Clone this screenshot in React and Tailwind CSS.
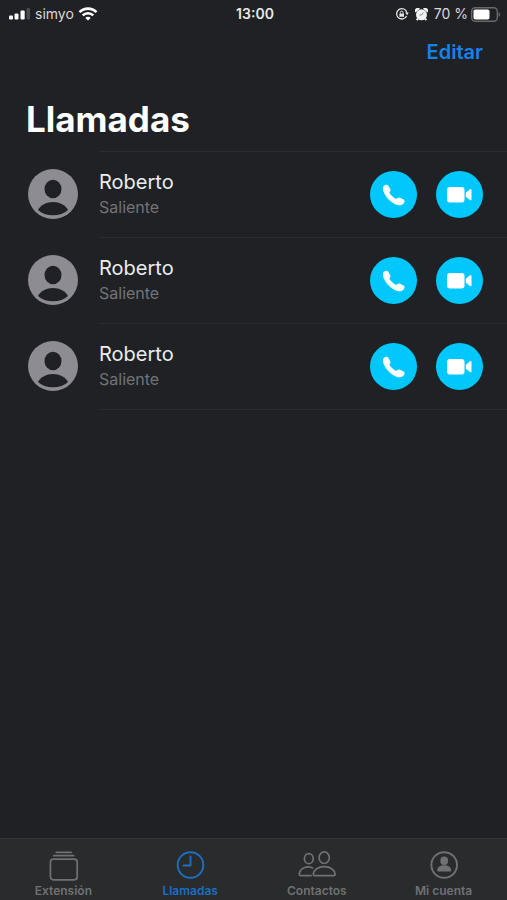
const calls = [
  { id: 1, name: "Roberto", kind: "Saliente" },
  { id: 2, name: "Roberto", kind: "Saliente" },
  { id: 3, name: "Roberto", kind: "Saliente" },
];

function SignalIcon() {
  return (
    <svg className="h-3 w-[22px]" viewBox="0 0 22 12" aria-hidden="true">
      <rect x="0" y="7.500" width="4" height="4" rx="1" fill="#fff" />
      <rect x="5.500" y="5.500" width="4" height="6" rx="1" fill="#fff" />
      <rect x="11.500" y="2.500" width="4.200" height="9" rx="1" fill="#fff" />
      <rect x="17.500" y="0" width="3.500" height="11.500" rx="1" fill="#4b4c4f" />
    </svg>
  );
}

function WifiIcon() {
  return (
    <svg className="h-[14px] w-5" viewBox="0 0 19 14" fill="none" stroke="#fff" strokeWidth="2.600" aria-hidden="true">
      <path d="M1 5.200C5.800.4 13.200.4 18 5.200" />
      <path d="M4.200 8.400c3-2.900 7.600-2.900 10.600 0" />
      <path d="M9.500 13.600 6.800 10.900c1.500-1.400 3.900-1.400 5.400 0z" fill="#fff" stroke="none" />
    </svg>
  );
}

function RotationLockIcon() {
  return (
    <svg className="size-[14px]" viewBox="0 0 14 14" fill="none" stroke="#e4e4e5" aria-hidden="true">
      <path d="M11.600 8.900A5.200 5.200 0 1 1 11.900 5.600" strokeWidth="1.300" />
      <path d="m10.100 5.600 3.600-.2-1.500 2.800z" fill="#e4e4e5" stroke="none" />
      <rect x="4.400" y="6.400" width="4.600" height="3.400" rx=".5" fill="#e4e4e5" stroke="none" />
      <path d="M5.300 6.600V5.500a1.400 1.400 0 0 1 2.800 0v1.100" strokeWidth="1" />
    </svg>
  );
}

function AlarmIcon() {
  return (
    <svg className="size-[13px]" viewBox="0 0 13 13" aria-hidden="true">
      <circle cx="6.500" cy="6.800" r="5.500" fill="#f2f2f2" />
      <path d="M.6 4.500A2.700 2.700 0 0 1 5 .8zM12.400 4.500A2.700 2.700 0 0 0 8 .8z" fill="#f2f2f2" />
      <path d="m3 10.500-1.300 1.700M10 10.500l1.300 1.700" stroke="#f2f2f2" strokeWidth="2" />
      <path d="M8.300 4.600 6.500 7H4.500" fill="none" stroke="#7a7b7d" strokeWidth=".9" />
    </svg>
  );
}

function BatteryIcon() {
  return (
    <svg className="h-[15px] w-[30px]" viewBox="0 0 30 15" aria-hidden="true">
      <rect x=".7" y=".7" width="25.600" height="13.600" rx="3.500" fill="none" stroke="#68696c" strokeWidth="1.400" />
      <rect x="2.500" y="2.500" width="16" height="10" rx="1.800" fill="#fff" />
      <path d="M27.600 5.200c2 .7 2 3.900 0 4.600z" fill="#68696c" />
    </svg>
  );
}

function Avatar() {
  return (
    <svg className="size-[50px] shrink-0" viewBox="0 0 50 50" aria-hidden="true">
      <circle cx="25" cy="25" r="25" fill="#8d8c92" />
      <ellipse cx="25" cy="20" rx="8.500" ry="9.300" fill="#202124" />
      <path d="M10 41C12.500 36 18.500 33 25 33s12.500 3 15 8C36.500 44.500 31 46.200 25 46.200S13.500 44.500 10 41z" fill="#202124" />
    </svg>
  );
}

function PhoneIcon() {
  return (
    <svg className="size-6" viewBox="0 0 24 24" fill="#fff" aria-hidden="true">
      <path d="M.9 5.400C.8 3.500 2.400 2 4 1.700c1-.2 1.800.2 2.300 1l1.900 3.200c.5.900.4 1.700-.2 2.500l-.4.600c-.3.500-.2 1 .2 1.500 1.500 2 3.400 3.700 5.600 5 .6.300 1.100.3 1.500-.1l.6-.5c.8-.6 1.600-.7 2.500-.2l3.600 1.900c.9.500 1.200 1.300.9 2.200-.6 2-2.300 3.400-4.600 3.400C11.300 22.200 1.300 13 .9 5.400z" />
    </svg>
  );
}

function VideoIcon() {
  return (
    <svg className="h-4 w-[26px]" viewBox="0 0 26 16" fill="#fff" aria-hidden="true">
      <rect x="0" y="0" width="17.500" height="15.500" rx="3" />
      <path d="M18.800 5.700 23 2.300c.7-.5 1.500-.2 1.500.7v9.400c0 .9-.8 1.200-1.500.7l-4.200-3.400z" />
    </svg>
  );
}

function ExtensionIcon() {
  return (
    <svg className="size-8" viewBox="0 0 32 32" fill="none" stroke="currentColor" strokeWidth="1.700" strokeLinecap="round" aria-hidden="true">
      <path d="M9.200 2.300h15M6.700 5.700h20" />
      <rect x="3.400" y="9.200" width="26.800" height="20.600" rx="3" />
    </svg>
  );
}

function ClockIcon() {
  return (
    <svg className="size-8" viewBox="0 0 32 32" fill="none" stroke="currentColor" strokeWidth="1.900" strokeLinecap="round" strokeLinejoin="round" aria-hidden="true">
      <circle cx="16.500" cy="15" r="12.800" />
      <path d="M16.500 6.500V15.500H9.500" />
    </svg>
  );
}

function ContactsIcon() {
  return (
    <svg className="h-8 w-10" viewBox="0 0 40 32" fill="none" stroke="currentColor" strokeWidth="1.700" strokeLinejoin="round" aria-hidden="true">
      <ellipse cx="11.800" cy="8.700" rx="4.400" ry="5" />
      <ellipse cx="27.200" cy="7.700" rx="5.100" ry="5.800" />
      <path d="M16.200 18.300c-6-3.500-13.600.2-13.900 5.900 0 1 .5 1.400 1.300 1.400h11.200" />
      <path d="M17.600 25.600c-.9 0-1.400-.5-1.300-1.400.4-4.400 5-7.600 10.900-7.600s10.500 3.200 10.900 7.600c.1.900-.4 1.400-1.300 1.400z" />
    </svg>
  );
}

function AccountIcon() {
  return (
    <svg className="size-8" viewBox="0 0 32 32" fill="currentColor" aria-hidden="true">
      <circle cx="16.200" cy="15" r="12.800" fill="none" stroke="currentColor" strokeWidth="1.900" />
      <ellipse cx="16.200" cy="10.700" rx="3.900" ry="4.200" />
      <path d="M9.200 20.300c.3-3.300 3.100-5 7-5s6.700 1.700 7 5c.1.700-.3 1.100-1 1.100H10.200c-.7 0-1.100-.4-1-1.100z" />
    </svg>
  );
}

const tabs = [
  { label: "Extensión", Icon: ExtensionIcon },
  { label: "Llamadas", Icon: ClockIcon, active: true },
  { label: "Contactos", Icon: ContactsIcon },
  { label: "Mi cuenta", Icon: AccountIcon },
];

function StatusBar() {
  return (
    <div className="grid h-7 grid-cols-[1fr_auto_1fr] items-center pr-1.5 pl-[9px] text-sm text-[#d9d9da]">
      <div className="flex items-center gap-1">
        <SignalIcon />
        <span>simyo</span>
        <WifiIcon />
      </div>
      <span className="font-semibold text-[#e8e8e9]">13:00</span>
      <div className="flex items-center justify-end gap-1.5">
        <RotationLockIcon />
        <AlarmIcon />
        <div className="flex items-center gap-[3px]">
          <span>70 %</span>
          <BatteryIcon />
        </div>
      </div>
    </div>
  );
}

function CallRow({ name, kind }) {
  return (
    <li className="flex h-[86px] items-center pl-7">
      <Avatar />
      <div className="ml-[21px] flex h-full flex-1 items-center border-t border-[#2c2d30] pr-6">
        <div className="flex-1">
          <p className="text-xl leading-6 text-[#ececed]">{name}</p>
          <p className="text-base leading-[26px] text-[#737377]">{kind}</p>
        </div>
        <div className="flex gap-[19px]">
          <button type="button" aria-label={`Llamar a ${name}`} className="flex size-[47px] items-center justify-center rounded-full bg-[#00c8fc]">
            <PhoneIcon />
          </button>
          <button type="button" aria-label={`Videollamada con ${name}`} className="flex size-[47px] items-center justify-center rounded-full bg-[#00c8fc]">
            <VideoIcon />
          </button>
        </div>
      </div>
    </li>
  );
}

export default function App() {
  return (
    <div className="flex min-h-screen flex-col bg-[#202124] font-['Inter',sans-serif]">
      <StatusBar />
      <header>
        <div className="flex h-12 items-center justify-end pr-6">
          <button type="button" className="text-xl font-semibold text-[#1583e9]">Editar</button>
        </div>
        <h1 className="pt-[23px] pb-3 pl-[26px] text-[35px] leading-10 font-bold text-white">Llamadas</h1>
      </header>
      <main className="flex-1">
        <ul>
          {calls.map((call) => (
            <CallRow key={call.id} name={call.name} kind={call.kind} />
          ))}
        </ul>
        <div className="ml-[99px] border-t border-[#2c2d30]" />
      </main>
      <nav className="grid h-[62px] grid-cols-4 border-t border-[#333437] bg-[#292b2c]">
        {tabs.map(({ label, Icon, active }) => (
          <a
            key={label}
            href="#"
            aria-current={active ? "page" : undefined}
            className={
              active
                ? "flex flex-col items-center pt-[11px] text-xs leading-[18px] font-semibold text-[#1b70c4]"
                : "flex flex-col items-center pt-[11px] text-xs leading-[18px] font-semibold text-[#707173]"
            }
          >
            <Icon />
            <span>{label}</span>
          </a>
        ))}
      </nav>
    </div>
  );
}
